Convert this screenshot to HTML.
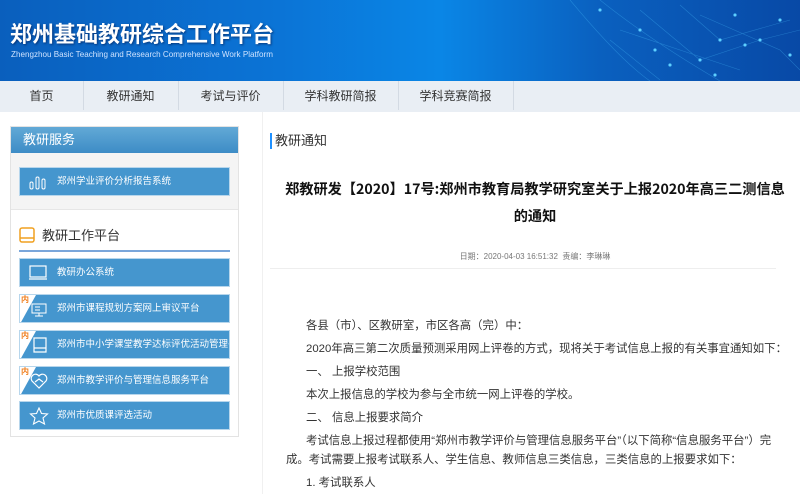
<!DOCTYPE html>
<html><head><meta charset="utf-8"><style>
*{margin:0;padding:0;box-sizing:border-box}
body{width:800px;height:494px;overflow:hidden;background:#fff;font-family:"Liberation Sans","Noto Sans CJK SC",sans-serif;position:relative}
.hdr{position:absolute;left:0;top:0;width:800px;height:81px;background:linear-gradient(90deg,#0a5fbd 0%,#0b74d6 35%,#0a86e6 55%,#0a60bf 75%,#0849a6 100%);overflow:hidden}
.hdr h1{position:absolute;left:10px;top:20px;color:#fff;font-size:22px;font-weight:bold;font-family:"Noto Sans CJK SC",sans-serif;line-height:26px;text-shadow:1px 1px 2px rgba(0,0,40,.5)}
.hdr .en{position:absolute;left:11px;top:50px;color:#cfe3ff;font-size:8.1px;white-space:nowrap}
.nav{position:absolute;left:0;top:81px;width:800px;height:31px;background:#e9eef4}
.nav span{position:absolute;top:0;height:31px;line-height:31px;font-size:12px;color:#333;text-align:center}
.sep{position:absolute;top:0;width:1px;height:29px;background:#d3dae3}
.side{position:absolute;left:10px;top:126px;width:229px;height:311px;border:1px solid #e3e3e3;background:#fff}
.sh{height:26px;background:linear-gradient(#62a9d6,#3d8cc6);color:#fff;font-size:13px;line-height:26px;padding-left:12px}
.gray{height:57px;background:#f4f4f4;border-bottom:1px solid #e6e6e6;position:relative}
.btn{position:absolute;left:8px;width:211px;height:29px;background:#4596ce;border:1px solid #b7d6ec;color:#fff;font-size:9.5px;line-height:27px;padding-left:37px;overflow:hidden;white-space:nowrap}
.btn svg{position:absolute;left:9px;top:5px}
.tag{position:absolute;left:0;top:0;width:0;height:0;border-top:29px solid #fff;border-right:16px solid transparent}
.tag b{position:absolute;left:1px;top:-29px;font-size:8px;color:#f08020;line-height:10px;font-weight:bold}
.wt{position:absolute;left:8px;top:98px;width:211px;height:27px;border-bottom:2px solid #7aa6da;font-size:13px;color:#333;padding-left:23px;line-height:22px}
.ttl{position:absolute;left:270px;top:133px;font-size:13px;color:#333;line-height:16px;padding-left:3px;border-left:2px solid #1e90ff}
h2{position:absolute;left:262px;width:546px;top:176px;text-align:center;font-size:14.2px;font-weight:bold;line-height:27px;color:#111;font-family:"Noto Sans CJK SC",sans-serif;white-space:nowrap}
.date{position:absolute;left:270px;width:530px;top:251px;text-align:center;font-size:8px;color:#777}
.hr{position:absolute;left:270px;top:268px;width:506px;height:1px;background:#eee}
.txt{position:absolute;left:286px;top:315px;width:500px;font-size:11.4px;color:#333;line-height:23px}
.txt p{text-indent:20px;white-space:nowrap}
.txt p.w{white-space:normal;line-height:19px;margin:2px 0}
</style></head><body>
<div class="hdr">
<svg width="800" height="81" style="position:absolute;left:0;top:0" stroke="#4cc3ff" stroke-opacity=".35" fill="#5fd0ff" stroke-width=".6">
<path d="M570 0 Q620 60 650 81 M600 0 Q650 40 720 81 M640 10 L700 60 L760 40 L800 30 M680 5 L720 40 L790 20 M620 30 L680 50 L740 70 M700 15 L780 50 L800 70 M610 40 L660 80" fill="none"/>
<circle cx="600" cy="10" r="1.5"/><circle cx="640" cy="30" r="1.5"/><circle cx="655" cy="50" r="1.5"/><circle cx="700" cy="60" r="1.5"/><circle cx="720" cy="40" r="1.5"/><circle cx="745" cy="45" r="1.5"/><circle cx="760" cy="40" r="1.5"/><circle cx="780" cy="20" r="1.5"/><circle cx="790" cy="55" r="1.5"/><circle cx="670" cy="65" r="1.5"/><circle cx="735" cy="15" r="1.5"/><circle cx="715" cy="75" r="1.5"/>
</svg>
<h1>郑州基础教研综合工作平台</h1>
<div class="en">Zhengzhou Basic Teaching and Research Comprehensive Work Platform</div>
</div>
<div class="nav">
<span style="left:0;width:83px">首页</span><div class="sep" style="left:83px"></div>
<span style="left:83px;width:95px">教研通知</span><div class="sep" style="left:178px"></div>
<span style="left:178px;width:105px">考试与评价</span><div class="sep" style="left:283px"></div>
<span style="left:283px;width:115px">学科教研简报</span><div class="sep" style="left:398px"></div>
<span style="left:398px;width:115px">学科竞赛简报</span><div class="sep" style="left:513px"></div>
</div>
<div class="side">
<div class="sh">教研服务</div>
<div class="gray">
<div class="btn" style="top:14px"><svg width="18" height="18" fill="none" stroke="#fff" stroke-width="1"><rect x="1" y="9" width="3" height="7" rx="1.5"/><rect x="7" y="4" width="3" height="12" rx="1.5"/><rect x="13" y="6" width="3" height="10" rx="1.5"/></svg>郑州学业评价分析报告系统</div>
</div>
<div class="wt"><svg width="17" height="17" style="position:absolute;left:0;top:2px" fill="none" stroke="#f0a020" stroke-width="1.5"><rect x="1" y="1" width="14" height="14" rx="2"/><path d="M1 11 H15"/></svg>教研工作平台</div>
<div class="btn" style="top:131px"><svg width="20" height="18" fill="none" stroke="#fff" stroke-width="1.2"><rect x="1" y="2" width="16" height="11"/><path d="M0 15 H18"/></svg>教研办公系统</div>
<div class="btn" style="top:167px"><div class="tag"><b>内</b></div><svg width="20" height="18" fill="none" stroke="#fff" stroke-width="1"><rect x="3" y="4" width="14" height="9"/><path d="M10 13v3M6 16h8M6 7h5M6 10h5"/></svg>郑州市课程规划方案网上审议平台</div>
<div class="btn" style="top:203px"><div class="tag"><b>内</b></div><svg width="20" height="18" fill="none" stroke="#fff" stroke-width="1.2"><path d="M5 2h12v14H5z M5 12h12"/></svg>郑州市中小学课堂教学达标评优活动管理平</div>
<div class="btn" style="top:239px"><div class="tag"><b>内</b></div><svg width="20" height="18" fill="none" stroke="#fff" stroke-width="1.2"><path d="M10 16 L3 9 A4 4 0 0 1 10 4 A4 4 0 0 1 17 9 Z M6 10l4-3 4 3"/></svg>郑州市教学评价与管理信息服务平台</div>
<div class="btn" style="top:274px"><svg width="20" height="18" fill="none" stroke="#fff" stroke-width="1.1"><path d="M10 1 L12.5 6.5 L18.5 7 L14 11 L15.5 17 L10 14 L4.5 17 L6 11 L1.5 7 L7.5 6.5 Z"/></svg>郑州市优质课评选活动</div>
</div>
<div style="position:absolute;left:262px;top:112px;width:1px;height:382px;background:#f0f0f0"></div>
<div class="ttl">教研通知</div>
<h2>郑教研发【2020】17号:郑州市教育局教学研究室关于上报2020年高三二测信息<br>的通知</h2>
<div class="date">日期：2020-04-03 16:51:32 &nbsp;责编：李琳琳</div>
<div class="hr"></div>
<div class="txt">
<p>各县（市）、区教研室，市区各高（完）中：</p>
<p>2020年高三第二次质量预测采用网上评卷的方式，现将关于考试信息上报的有关事宜通知如下：</p>
<p>一、 上报学校范围</p>
<p>本次上报信息的学校为参与全市统一网上评卷的学校。</p>
<p>二、 信息上报要求简介</p>
<p class="w">考试信息上报过程都使用“郑州市教学评价与管理信息服务平台”（以下简称“信息服务平台”）完成。考试需要上报考试联系人、学生信息、教师信息三类信息，三类信息的上报要求如下：</p>
<p>1. 考试联系人</p>
</div>
</body></html>
